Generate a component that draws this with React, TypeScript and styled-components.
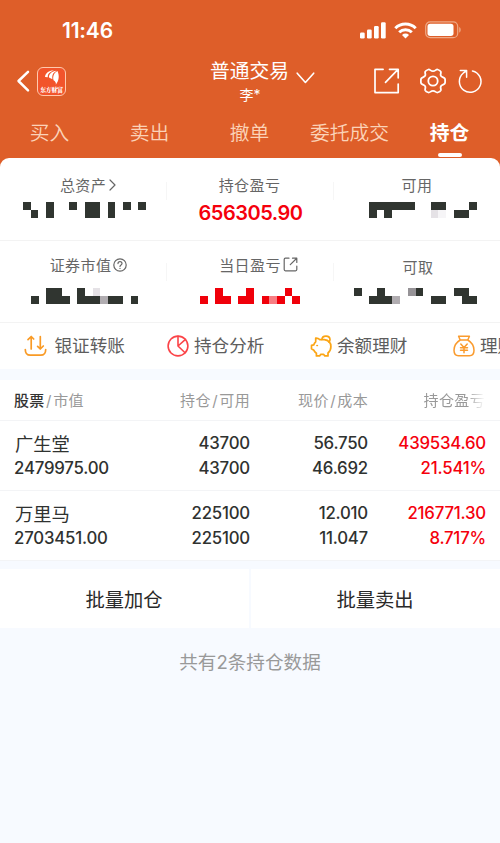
import React from "react";
import styled, { createGlobalStyle } from "styled-components";

const GlobalStyle = createGlobalStyle`
  * { box-sizing: border-box; }
  body {
    margin: 0;
    background: #f7faff;
    font-family: Inter, "Noto Sans CJK SC", sans-serif;
    overflow: hidden;
  }
`;

const RED = "#f5000c";
const INK = "#2f3230";

const Screen = styled.main`
  width: 500px;
  height: 843px;
  display: flex;
  flex-direction: column;
  overflow: hidden;
  background: #f7faff;
`;

const Hero = styled.header`
  height: 158px;
  flex: none;
  background: #de5e29;
  color: #fff;
`;

const StatusBar = styled.div`
  height: 60px;
  padding: 0 38px 0 62px;
  display: flex;
  align-items: center;
  justify-content: space-between;
`;

const Clock = styled.time`
  font-size: 21px;
  line-height: 24px;
  padding-top: 1px;
  font-weight: 600;
  letter-spacing: -0.2px;
`;

const StatusIcons = styled.div`
  display: flex;
  align-items: center;
  gap: 8px;
  svg { display: block; }
`;

const NavBar = styled.div`
  height: 46px;
  padding: 0 18px 0 16px;
  display: grid;
  grid-template-columns: 1fr auto 1fr;
  align-items: start;
`;

const NavGroup = styled.div`
  height: 42px;
  display: flex;
  align-items: center;
  svg { display: block; flex: none; }
`;

const NavActions = styled(NavGroup)`
  justify-content: flex-end;
  & > :nth-child(2) { margin: 0 12px 0 20px; }
`;

const BrandMark = styled.div`
  width: 29px;
  height: 29px;
  margin-left: 7px;
  border: 1px solid #ffc9ad;
  border-radius: 6px;
  background: #f2542b;
  display: flex;
  flex-direction: column;
  align-items: center;
  padding-top: 2px;
`;

const BrandName = styled.span`
  font: 900 5.7px/7px "Noto Serif CJK SC", "Noto Sans CJK SC", serif;
  white-space: nowrap;
  margin-top: 1px;
`;

const Account = styled.div`
  width: 106px;
  transform: translateX(14px);
`;

const AccountType = styled.div`
  display: flex;
  align-items: center;
  gap: 7px;
  height: 23px;
  font-size: 19.8px;
  line-height: 23px;
  white-space: nowrap;
  svg { flex: none; margin-top: 12px; }
`;

const AccountName = styled.div`
  width: 80px;
  font-size: 14px;
  line-height: 18px;
  margin-top: 3px;
  text-align: center;
`;

const Tabs = styled.nav`
  height: 52px;
  display: grid;
  grid-template-columns: repeat(5, 1fr);
`;

const Tab = styled.a<{ $active?: boolean }>`
  display: flex;
  flex-direction: column;
  align-items: center;
  padding-top: 12px;
  font-size: 19.8px;
  line-height: 30px;
  white-space: nowrap;
  margin-left: -1px;
  color: ${(p) => (p.$active ? "#fff" : "#fbd3b8")};
  font-weight: ${(p) => (p.$active ? 700 : 350)};
  &::after {
    content: "";
    display: ${(p) => (p.$active ? "block" : "none")};
    width: 24px;
    height: 4px;
    margin-top: 5px;
    border-radius: 2px;
    background: #fff;
  }
`;

const SummaryBackdrop = styled.div`
  flex: none;
  background: linear-gradient(#de5e29 20px, #fff 20px);
`;

const Summary = styled.section`
  display: grid;
  grid-template-columns: 167px 167px 166px;
  grid-template-rows: 83px 82px;
  background: #fff;
  border-radius: 9px 9px 0 0;
`;

const Metric = styled.div<{ $second?: boolean }>`
  border-bottom: 1px solid #f3f3f3;
  padding-top: ${(p) => (p.$second ? 13 : 16)}px;
  background: linear-gradient(#f6f6f6, #f6f6f6) right ${(p) => (p.$second ? 22 : 24)}px / 1px 18px no-repeat;
  &:nth-child(3n) { background: none; }
`;

const MetricLabel = styled.div<{ $shift: number; $drop?: number }>`
  height: 20px;
  display: flex;
  align-items: center;
  justify-content: center;
  gap: 2px;
  font-size: 15px;
  letter-spacing: 0.4px;
  color: #666;
  transform: translate(${(p) => p.$shift}px, ${(p) => p.$drop ?? 0}px);
  svg { flex: none; position: relative; top: 0.5px; }
`;

const MetricValue = styled.div`
  margin-top: 7px;
  font-size: 20px;
  line-height: 24px;
  font-weight: 600;
  color: ${RED};
  text-align: center;
  letter-spacing: -0.5px;
`;

const MosaicBox = styled.svg<{ $left: number; $top: number }>`
  display: block;
  margin: ${(p) => p.$top}px 0 0 ${(p) => p.$left}px;
`;

const Shortcuts = styled.section`
  height: 46px;
  flex: none;
  display: grid;
  grid-template-columns: repeat(4, 143px);
  padding-left: 24px;
  overflow: hidden;
  background: #fff;
`;

const Shortcut = styled.a`
  display: flex;
  align-items: center;
  gap: 5px;
  font-size: 17.6px;
  line-height: 46px;
  color: #5d5d5d;
  white-space: nowrap;
  svg { flex: none; }
  &:first-child { gap: 7.5px; }
`;

const Holdings = styled.section`
  flex: none;
  margin-top: 11px;
  background: #fff;
`;

const Columns = styled.div`
  display: grid;
  grid-template-columns: 120px 116px 118px 118px;
  padding: 0 14px;
  text-align: right;
  border-bottom: 1px solid #f3f4f6;
  & > :first-child { text-align: left; }
`;

const HeadRow = styled(Columns)`
  height: 41px;
  font-size: 15px;
  line-height: 41px;
  color: #999;
  letter-spacing: 0.35px;
  white-space: nowrap;
`;

const HeadMain = styled.span`
  color: #333;
  font-weight: 500;
`;

const Slash = styled.span`
  padding: 0 1.4px;
`;

const FadedHead = styled.div`
  mask-image: linear-gradient(90deg, #000 100px, transparent 118px);
  transform: translateX(-1px);
`;

const HoldingRow = styled(Columns)`
  height: 70px;
  padding-top: 10px;
  font-size: 16.8px;
  line-height: 24.5px;
  font-weight: 550;
  letter-spacing: -0.2px;
  color: ${INK};
`;

const Pair = styled.div<{ $gain?: boolean }>`
  color: ${(p) => (p.$gain ? RED : "inherit")};
  span { display: block; }
`;

const StockName = styled.span`
  font-size: 18.3px;
  font-weight: 400;
  letter-spacing: 0;
  transform: translate(1px, 1px);
`;

const Batch = styled.section`
  height: 59px;
  margin-top: 8px;
  flex: none;
  display: grid;
  grid-template-columns: 249px 249px;
  gap: 2px;
`;

const BatchButton = styled.button`
  border: 0;
  padding: 0 1px 0 0;
  background: #fff;
  color: #292929;
  font-family: inherit;
  font-size: 19.3px;
  font-weight: 400;
`;

const Total = styled.p`
  margin: 22px 0 0;
  text-align: center;
  font-size: 18.6px;
  line-height: 24px;
  color: #999;
`;

const CELL = 100 / 13;
const tones: Record<string, string> = {
  "#": "#303530",
  r: "#f0000a",
  p: "#f77e83",
  g: "#b0acb0",
  d: "#969397",
  l: "#e5e2e6",
  w: "#f6f5f7",
};

function Mosaic({ rows, left, top }: { rows: string[]; left: number; top: number }) {
  const width = rows[0].length * CELL;
  return (
    <MosaicBox $left={left} $top={top} width={width} height={CELL * 2 + 0.6} shapeRendering="crispEdges" aria-hidden>
      {rows.flatMap((row, y) =>
        [...row].map((c, x) =>
          c === "." ? null : (
            <rect key={`${x}-${y}`} x={x * CELL} y={y * CELL} width={CELL + 0.1} height={CELL + 0.3} fill={tones[c]} />
          ),
        ),
      )}
    </MosaicBox>
  );
}

const line = { fill: "none", stroke: "currentColor", strokeLinecap: "round", strokeLinejoin: "round" } as const;

const SignalIcon = () => (
  <svg width="26" height="17" viewBox="0 0 26 17" fill="#fff">
    <rect x="0" y="10.5" width="4.700" height="6" rx="1.2" />
    <rect x="7" y="7.5" width="4.700" height="9" rx="1.2" />
    <rect x="14" y="4" width="4.700" height="12.500" rx="1.2" />
    <rect x="21" y="0.300" width="4.700" height="16.200" rx="1.2" />
  </svg>
);

const WifiIcon = () => (
  <svg width="23" height="17" viewBox="0 0 23 17" fill="none" stroke="#fff" strokeWidth="3">
    <path d="M1.300 6.200a14.600 14.600 0 0 1 20.400 0" />
    <path d="M5.200 10.300a9 9 0 0 1 12.600 0" />
    <path d="M11.500 16.500 8 13a5 5 0 0 1 7 0Z" fill="#fff" stroke="none" />
  </svg>
);

const BatteryIcon = () => (
  <svg width="37" height="18" viewBox="0 0 37 18">
    <rect x="0.700" y="0.900" width="32" height="15.800" rx="4.500" fill="none" stroke="#efa986" strokeWidth="1.200" />
    <rect x="2.500" y="2.700" width="26" height="12.200" rx="2.700" fill="#fff" />
    <path d="M34.200 6v5.600c2-.8 2-4.800 0-5.600Z" fill="#efa986" />
  </svg>
);

const BackIcon = () => (
  <svg width="14" height="24" viewBox="0 0 14 24" {...line} strokeWidth="2.500">
    <path d="M12 2.800 2.500 12l9.500 9.300" />
  </svg>
);

const BrandIcon = () => (
  <svg width="16" height="15" viewBox="0 0 16 15" fill="#fff">
    <path d="M1 7C1.500 3 5 .3 10 .5 5.500 2 3.500 4 3.800 7.200Z" />
    <path d="M5 7.500C4.600 4 8 1.200 12.500.8 8.800 3.200 8 5 8.400 9.300Z" />
    <path d="M9.500 10.200C8.500 6 10.200 2.700 13.500 1c2 4.500 1.700 9.500-1.700 13.700.5-2-.5-3.500-2.300-4.500Z" />
  </svg>
);

const DownIcon = () => (
  <svg width="19" height="12" viewBox="0 0 19 12" {...line} strokeWidth="1.600">
    <path d="m1.200 1.200 8.200 9.300 8.300-9.300" />
  </svg>
);

const ExportIcon = () => (
  <svg width="26" height="26" viewBox="0.500 0 26 26" {...line} strokeWidth="1.700">
    <path d="M9.600 1.300H1.500v23.300h23.200V16M16 1.300h8.700v8.500M24.300 1.700 12 14.300" />
  </svg>
);

const GearIcon = () => (
  <svg width="26" height="26" viewBox="0 0 26 26" {...line} strokeWidth="1.800">
    <path d="M8.500 1.500c1.300-.4 2.200 1.700 4.500 1.700s3.200-2.100 4.500-1.700c1.300.4 2.900 1.300 3.300 2.200.5 1.500-.8 2.400.1 4.100 1 1.800 3.800 1.500 4.100 3.200.2 1.300.2 2.700 0 4-.3 1.700-3.100 1.400-4.100 3.200-.9 1.700.4 2.600-.1 4.100-.4.900-2 1.800-3.300 2.200-1.300.4-2.200-1.700-4.500-1.700s-3.200 2.100-4.500 1.700c-1.300-.4-2.900-1.300-3.300-2.200-.5-1.500.8-2.400-.1-4.100-1-1.800-3.800-1.500-4.100-3.200a13 13 0 0 1 0-4c.3-1.700 3.100-1.400 4.100-3.200.9-1.700-.4-2.600.1-4.100.4-.9 2-1.800 3.300-2.200Z" />
    <circle cx="13" cy="13" r="4.700" />
  </svg>
);

const RefreshIcon = () => (
  <svg width="24" height="25" viewBox="0 0 24 25" {...line} strokeWidth="1.500">
    <path d="M14.500 1.900a10.800 10.800 0 1 1-9.300 2.300L8.600 1.700M2.300 1.500h6.300v6.700" />
  </svg>
);

const RightIcon = () => (
  <svg width="8" height="12" viewBox="0 0 8 12" {...line} strokeWidth="1.200">
    <path d="m1.500 1 5 5-5 5" />
  </svg>
);

const HelpIcon = () => (
  <svg width="14" height="14" viewBox="0 0 14 14" {...line} strokeWidth="1.200">
    <circle cx="7" cy="7" r="6.200" />
    <path d="M5 5.600c0-2.700 4-2.700 4 0 0 1.300-2 1.400-2 2.800M7 10.300v.1" />
  </svg>
);

const OpenIcon = () => (
  <svg width="15" height="15" viewBox="0 0 15 15" {...line} strokeWidth="1.200">
    <path d="M6 1.200H2.400c-.8 0-1.200.4-1.200 1.200v10.200c0 .8.400 1.200 1.200 1.200h10.200c.8 0 1.200-.4 1.200-1.200V9M9.500 1.200h4.300v4.300M13.500 1.500 7.300 7.700" />
  </svg>
);

const TransferIcon = () => (
  <svg width="23" height="22" viewBox="0 0 23 22" {...line} stroke="#f99a25" strokeWidth="1.700">
    <path d="M7.200 14V1.500L4 4.700M7.200 1.500 9.700 4M16.300 1.500V14l3-3M16.300 14l-2.700-2.700M1.300 14.500c0 4 1.200 5.700 5 5.700h10.400c3.800 0 5-1.700 5-5.700" />
  </svg>
);

const PieIcon = () => (
  <svg width="22" height="22" viewBox="0 0 22 22" {...line} stroke="#fb4448" strokeWidth="1.600">
    <circle cx="11" cy="11" r="9.900" />
    <path d="M11 1.200V11l7 6.800M11 11l7.500-6.700" />
  </svg>
);

const PigIcon = () => (
  <svg width="22" height="22" viewBox="-0.500 0 22 22" {...line} stroke="#fba515" strokeWidth="1.700">
    <path d="M5.200 3.200C7 3 8.300 3.700 9.300 4.700h4.500c4.200.5 6.600 3.300 6.600 7.100 0 2.800-1.100 4.700-2.900 6.200v2.900h-3.200L13 19.300h-2.700l-1.200 1.600H5.900V18.200c-1.200-.8-2-1.700-2.500-2.900L1 13.800v-3.400l2.200-.5c.4-1.300 1.100-2.300 2-3.100Z" />
    <path d="M11.400 4.500C11.600.2 19.200-.2 19.500 4.500c0 1.200-.4 2-1.100 2.700" />
    <circle cx="6.600" cy="10.600" r=".5" fill="#fba515" strokeWidth="1" />
  </svg>
);

const MoneyBagIcon = () => (
  <svg width="22" height="22" viewBox="0 0 22 22" {...line} stroke="#fa9b2e" strokeWidth="1.500">
    <path d="M7.200 5 5.600 1.200h10.800L14.800 5M7.200 5h7.600M7.200 5C3 7.500 1 11.500 1 15.300c0 3.900 1.200 5.500 4.500 5.500h11c3.300 0 4.500-1.600 4.500-5.500C21 11.500 19 7.500 14.800 5M7.800 9l3.200 3.500L14.200 9M7.500 12.700h7M7.500 15.200h7M11 12.700v5" />
  </svg>
);

const tabs = ["买入", "卖出", "撤单", "委托成交", "持仓"];

const shortcuts = [
  { icon: <TransferIcon />, label: "银证转账" },
  { icon: <PieIcon />, label: "持仓分析" },
  { icon: <PigIcon />, label: "余额理财" },
  { icon: <MoneyBagIcon />, label: "理财" },
];

const holdings = [
  { name: "广生堂", value: "2479975.00", held: "43700", usable: "43700", price: "56.750", cost: "46.692", gain: "439534.60", rate: "21.541%" },
  { name: "万里马", value: "2703451.00", held: "225100", usable: "225100", price: "12.010", cost: "11.047", gain: "216771.30", rate: "8.717%" },
];

export default function App() {
  return (
    <>
      <GlobalStyle />
      <Screen>
        <Hero>
          <StatusBar>
            <Clock>11:46</Clock>
            <StatusIcons><SignalIcon /><WifiIcon /><BatteryIcon /></StatusIcons>
          </StatusBar>
          <NavBar>
            <NavGroup>
              <BackIcon />
              <BrandMark><BrandIcon /><BrandName>东方财富</BrandName></BrandMark>
            </NavGroup>
            <Account>
              <AccountType>普通交易<DownIcon /></AccountType>
              <AccountName>李*</AccountName>
            </Account>
            <NavActions>
              <ExportIcon />
              <GearIcon />
              <RefreshIcon />
            </NavActions>
          </NavBar>
          <Tabs>
            {tabs.map((t) => <Tab key={t} $active={t === "持仓"}>{t}</Tab>)}
          </Tabs>
        </Hero>

        <SummaryBackdrop>
          <Summary>
            <Metric>
              <MetricLabel $shift={4.5}>总资产<RightIcon /></MetricLabel>
              <Mosaic left={23.08} top={8.3} rows={["#..#..#.##.#.#.#", ".#.#....##.#...."]} />
            </Metric>
            <Metric>
              <MetricLabel $shift={-1}>持仓盈亏</MetricLabel>
              <MetricValue>656305.90</MetricValue>
            </Metric>
            <Metric>
              <MetricLabel $shift={0}>可用</MetricLabel>
              <Mosaic left={35.2} top={8.3} rows={["######..##...#", "#.#.....lw.##."]} />
            </Metric>
            <Metric $second>
              <MetricLabel $shift={5}>证券市值<HelpIcon /></MetricLabel>
              <Mosaic left={30.77} top={13.7} rows={["..##..#.l.....", "#.###.###g##.#"]} />
            </Metric>
            <Metric $second>
              <MetricLabel $shift={8}>当日盈亏<OpenIcon /></MetricLabel>
              <Mosaic left={33} top={13.7} rows={["..r...r....r.", "r.rr.rr.rpr.r"]} />
            </Metric>
            <Metric $second>
              <MetricLabel $shift={1} $drop={2}>可取</MetricLabel>
              <Mosaic left={19.85} top={13.7} rows={["#..#...d#....##.", "..###g....##..##"]} />
            </Metric>
          </Summary>
        </SummaryBackdrop>

        <Shortcuts>
          {shortcuts.map((s) => <Shortcut key={s.label}>{s.icon}{s.label}</Shortcut>)}
        </Shortcuts>

        <Holdings>
          <HeadRow>
            <div><HeadMain>股票</HeadMain><Slash>/</Slash>市值</div>
            <div>持仓<Slash>/</Slash>可用</div>
            <div>现价<Slash>/</Slash>成本</div>
            <FadedHead>持仓盈亏</FadedHead>
          </HeadRow>
          {holdings.map((h) => (
            <HoldingRow key={h.name}>
              <Pair><StockName>{h.name}</StockName><span>{h.value}</span></Pair>
              <Pair><span>{h.held}</span><span>{h.usable}</span></Pair>
              <Pair><span>{h.price}</span><span>{h.cost}</span></Pair>
              <Pair $gain><span>{h.gain}</span><span>{h.rate}</span></Pair>
            </HoldingRow>
          ))}
        </Holdings>

        <Batch>
          <BatchButton>批量加仓</BatchButton>
          <BatchButton>批量卖出</BatchButton>
        </Batch>
        <Total>共有2条持仓数据</Total>
      </Screen>
    </>
  );
}
